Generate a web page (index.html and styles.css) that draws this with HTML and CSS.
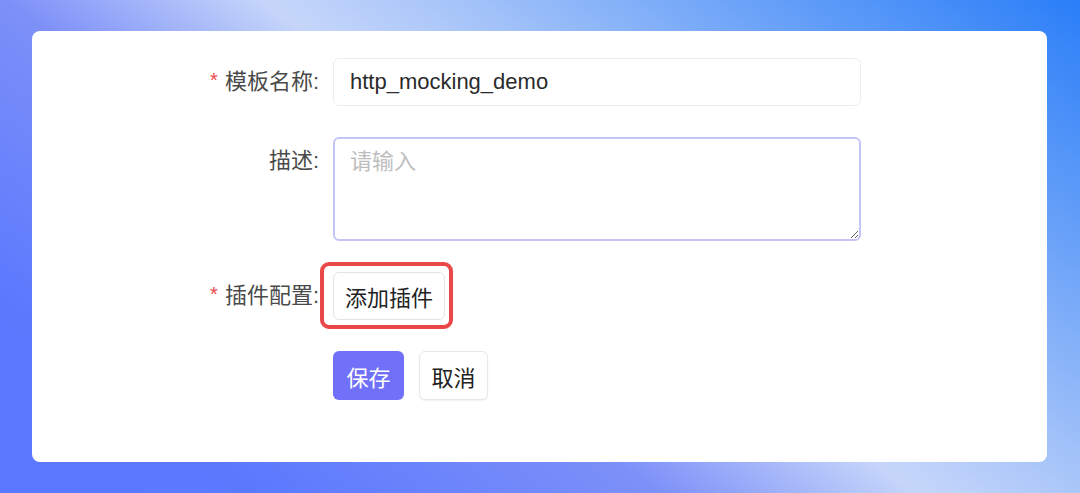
FILE: index.html
```html
<!DOCTYPE html>
<html lang="zh-CN">
<head>
    <meta charset="UTF-8">
    <meta name="viewport" content="width=device-width, initial-scale=1.0">
    <title>模板配置</title>
    <link rel="stylesheet" href="styles.css">
</head>
<body>

<div class="page">
    <div class="card">
        <form class="form">
            <label class="label"><span class="star">*</span>模板名称:</label>
            <div class="control">
                <input class="input" type="text" value="http_mocking_demo">
            </div>

            <label class="label">描述:</label>
            <div class="control">
                <textarea class="textarea" placeholder="请输入"></textarea>
            </div>

            <label class="label"><span class="star">*</span>插件配置:</label>
            <div class="control">
                <span class="highlight">
                    <button type="button" class="btn">添加插件</button>
                </span>
            </div>

            <div class="label"></div>
            <div class="control actions">
                <button type="button" class="btn btn-primary">保存</button>
                <button type="button" class="btn btn-cancel">取消</button>
            </div>
        </form>
    </div>
</div>

</body>
</html>
```

FILE: styles.css
```css
/* Fond dégradé */
body {
    margin: 0;
    font-family: "Liberation Sans", "Noto Sans CJK SC", sans-serif;
    font-size: 22px;
}

.page {
    width: 1080px;
    height: 493px;
    box-sizing: border-box;
    padding: 31px 33px 31px 32px;
    background: linear-gradient(37deg,
        #5a77ff 0%,
        #5c79fe 15%,
        #7d90f8 38%,
        #c6d6fa 53%,
        #a8c5f9 63%,
        #6ca3f8 80%,
        #2a7ef8 100%);
}

.card {
    height: 100%;
    background-color: #fff;
    border-radius: 8px;
    padding-top: 27px;
    box-sizing: border-box;
}

/* Formulaire */
.form {
    display: grid;
    grid-template-columns: 289px 528px;
    column-gap: 12px;
    row-gap: 31px;
}

.label {
    height: 48px;
    text-align: right;
    line-height: 48px;
    color: #4a4a4a;
    padding-right: 2px;
}

.star {
    color: #f04a4a;
    font-size: 20px;
    line-height: 0;
    margin-right: 7px;
    vertical-align: 2px;
}

.input {
    display: block;
    width: 100%;
    height: 48px;
    box-sizing: border-box;
    border: 1px solid #ededed;
    border-radius: 6px;
    padding: 0 16px;
    font: inherit;
    color: #2b2b2b;
    outline: none;
}

.textarea {
    display: block;
    width: 100%;
    height: 104px;
    box-sizing: border-box;
    border: 2px solid #c4c4f8;
    border-radius: 6px;
    padding: 8px 15px;
    font: inherit;
    line-height: 30px;
    color: #2b2b2b;
    outline: none;
}

.textarea::placeholder {
    color: #bdbdbd;
}

/* Boutons */
.btn {
    height: 48px;
    padding: 0 11px;
    border: 1px solid #e4e4e4;
    border-radius: 6px;
    background-color: #fff;
    font: inherit;
    color: #222;
    cursor: pointer;
}

.highlight {
    position: relative;
    display: inline-block;
    vertical-align: top;
}

.highlight::after {
    content: "";
    position: absolute;
    top: -10px;
    left: -13px;
    right: -8px;
    bottom: -9px;
    border: 4px solid #ea4848;
    border-radius: 9px;
}

.actions {
    display: flex;
    gap: 15px;
}

.btn-primary {
    height: 49px;
    width: 71px;
    padding: 0;
    border: none;
    background-color: #7070f9;
    color: #fff;
}

.btn-cancel {
    height: 49px;
    width: 69px;
    padding: 0;
    border-color: #e8e8e8;
    box-shadow: 0 1px 2px rgba(0, 0, 0, 0.06);
}
```
